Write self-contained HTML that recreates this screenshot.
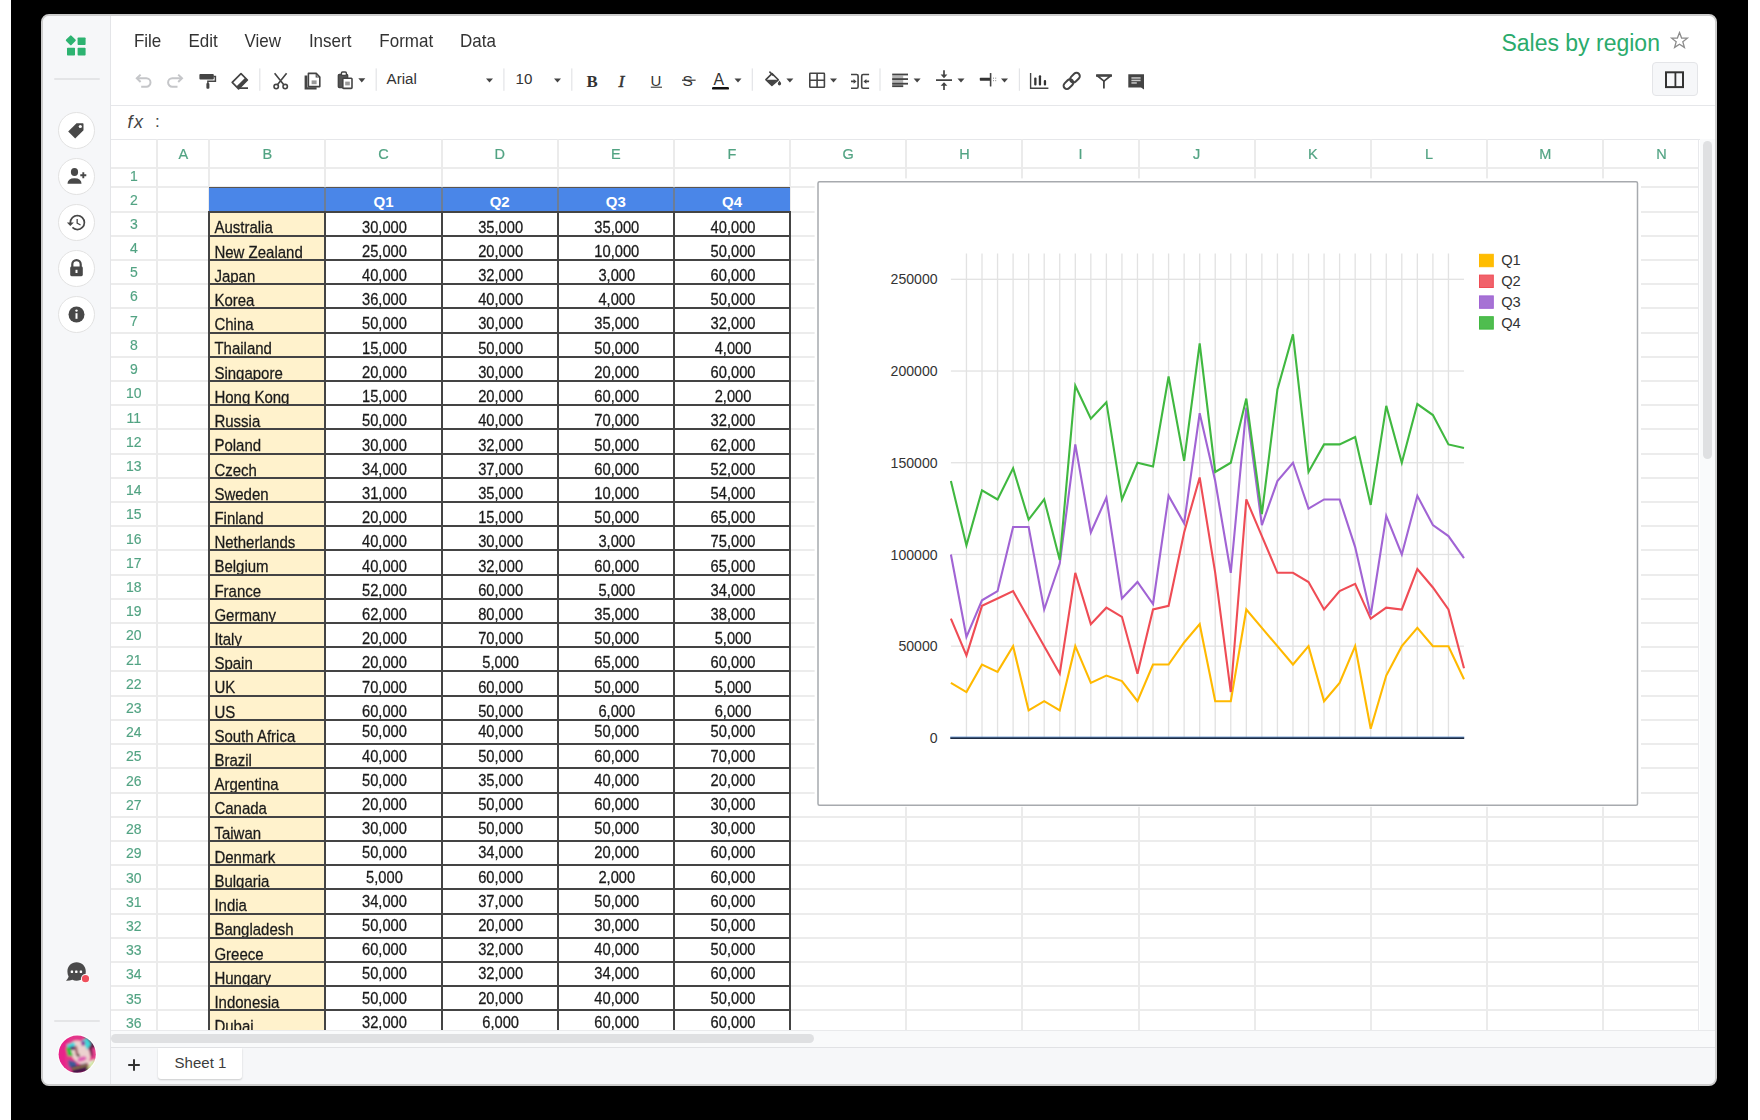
<!DOCTYPE html>
<html><head><meta charset="utf-8">
<style>
*{margin:0;padding:0;box-sizing:border-box}
html,body{width:1760px;height:1120px;overflow:hidden;background:#fff}
body{position:relative;font-family:"Liberation Sans",sans-serif;color:#333}
.abs{position:absolute}
#bg{position:absolute;left:11px;top:0;width:1737px;height:1120px;background:#000}
#win{position:absolute;left:41px;top:14px;width:1676px;height:1072px;background:#f6f7f9;border:2px solid #cdcdcd;border-radius:8px;overflow:hidden}
.menu{position:absolute;top:32.1px;font-size:17px;color:#333;white-space:nowrap;transform:scaleY(1.07);transform-origin:0 80%}
.tb{position:absolute}
.sep{position:absolute;top:68px;width:1px;height:23px;background:#e3e4e7}
.gl{position:absolute;background:#e6e6e6}
.ch{position:absolute;font-size:14.5px;color:#52a383;text-align:center;white-space:nowrap;transform:scaleY(1.05);transform-origin:50% 84.6%;-webkit-text-stroke:0.2px #52a383}
.rn{position:absolute;font-size:14px;color:#52a383;text-align:center;white-space:nowrap;-webkit-text-stroke:0.15px #52a383;transform:scaleY(1.06);transform-origin:50% 84.6%}
.cell{position:absolute;overflow:hidden;white-space:nowrap}
.txt{position:absolute;left:5px;font-size:15px;color:#1a1a1a;line-height:1;-webkit-text-stroke:0.25px #1a1a1a;transform:scaleY(1.07);transform-origin:0 84.6%}
.num{position:absolute;left:1px;right:-1px;text-align:center;font-size:14.7px;color:#1a1a1a;line-height:1;-webkit-text-stroke:0.25px #1a1a1a;transform:scaleY(1.1);transform-origin:50% 84.6%}
.circ{position:absolute;left:58px;width:37px;height:37px;border-radius:50%;background:#fff;border:1px solid #e2e2e2}
</style></head><body>
<div id="bg"></div>

<div id="win"></div>
<div class="abs" style="left:0;top:0;width:1760px;height:1120px;overflow:hidden;clip-path:inset(16px 45px 36px 43px round 6px)">
<div class="abs" style="left:43px;top:16px;width:67px;height:1068px;background:#f6f7f9"></div>
<div class="abs" style="left:110px;top:16px;width:1px;height:1068px;background:#e4e5e8"></div>
<div class="abs" style="left:111px;top:16px;width:1604px;height:1014px;background:#fff"></div>
<div class="abs" style="left:111px;top:105px;width:1604px;height:1px;background:#e6e7ea"></div>
<div class="abs" style="left:111px;top:138.5px;width:1604px;height:1px;background:#e6e7ea"></div>
<svg class="abs" style="left:60px;top:34px" width="30" height="26" viewBox="0 0 30 26">
<rect x="7" y="2.5" width="7.6" height="7.6" rx="1" transform="rotate(45 10.8 6.3)" fill="#2db371"/>
<rect x="17.6" y="3.4" width="8" height="7.6" rx="0.8" fill="#2db371"/>
<rect x="7" y="13.8" width="8" height="7.8" rx="0.8" fill="#2db371"/>
<rect x="17.6" y="13.8" width="8" height="7.8" rx="0.8" fill="#2db371"/>
</svg>
<div class="abs" style="left:53.5px;top:78px;width:46px;height:2px;background:#e4e5e7;border-radius:1px"></div>
<div class="abs" style="left:53.5px;top:1019.5px;width:46px;height:2px;background:#e4e5e7;border-radius:1px"></div>
<div class="circ" style="top:111.7px"></div>
<div class="circ" style="top:157.8px"></div>
<div class="circ" style="top:203.8px"></div>
<div class="circ" style="top:249.8px"></div>
<div class="circ" style="top:295.8px"></div>
<svg class="abs" style="left:66px;top:120px" width="21" height="21" viewBox="0 0 21 21">
<path d="M10.5 3.2 L16.8 3.2 Q17.5 3.2 17.5 3.9 L17.5 10.2 L9.2 18.5 L2.2 11.5 Z" fill="#484848"/>
<circle cx="14.3" cy="6.5" r="1.6" fill="#fff"/></svg>
<svg class="abs" style="left:66px;top:166px" width="22" height="20" viewBox="0 0 22 20">
<ellipse cx="8.5" cy="6" rx="3.6" ry="4" fill="#484848"/>
<path d="M1.5 17.8 Q1.5 12.2 8.5 12.2 Q15.5 12.2 15.5 17.8 Z" fill="#484848"/>
<path d="M17.3 6.2 V12.2 M14.3 9.2 H20.3" stroke="#484848" stroke-width="1.9"/></svg>
<svg class="abs" style="left:66px;top:212px" width="21" height="21" viewBox="0 0 24 24">
<path d="M13 3a9 9 0 0 0-9 9H1l3.89 3.89.07.14L9 12H6c0-3.87 3.13-7 7-7s7 3.13 7 7-3.13 7-7 7c-1.93 0-3.68-.79-4.94-2.06l-1.42 1.42A8.954 8.954 0 0 0 13 21a9 9 0 0 0 0-18zm-1 5v5l4.28 2.54.72-1.21-3.5-2.08V8H12z" fill="#484848"/></svg>
<svg class="abs" style="left:67px;top:258px" width="19" height="20" viewBox="0 0 19 20">
<path d="M5.3 9 V6.3 A4.2 4.2 0 0 1 13.7 6.3 V9" stroke="#484848" stroke-width="2.2" fill="none"/>
<rect x="3.2" y="8.6" width="12.6" height="9.6" rx="1.4" fill="#484848"/>
<rect x="8.5" y="11.8" width="2" height="3.2" fill="#fff"/></svg>
<svg class="abs" style="left:67px;top:305px" width="19" height="19" viewBox="0 0 19 19">
<circle cx="9.5" cy="9.5" r="8" fill="#484848"/>
<rect x="8.5" y="8.2" width="2" height="5.6" fill="#fff"/><circle cx="9.5" cy="5.6" r="1.2" fill="#fff"/></svg>
<svg class="abs" style="left:64px;top:960px" width="28" height="26" viewBox="0 0 28 26">
<path d="M12.6 2.3 C17.8 2.3 21.8 6.2 21.8 11.5 C21.8 16.8 17.8 20.7 12.6 20.7 C11 20.7 9.6 20.4 8.4 19.8 C6.6 20.5 4.4 20.9 2 20.8 C3.2 19.6 4.1 18.4 4.6 16.6 C3.8 15.1 3.4 13.4 3.4 11.5 C3.4 6.2 7.4 2.3 12.6 2.3Z" fill="#4a4a4b"/>
<rect x="6.7" y="10.5" width="2.4" height="2.4" rx="0.4" fill="#fff"/><rect x="11.1" y="10.5" width="2.4" height="2.4" rx="0.4" fill="#fff"/><rect x="15.7" y="10.5" width="2.4" height="2.4" rx="0.4" fill="#fff"/>
<circle cx="21.5" cy="18.7" r="4.6" fill="#fff"/><circle cx="21.5" cy="18.7" r="3.6" fill="#ef4f5c"/></svg>
<svg class="abs" style="left:56px;top:1033px" width="41" height="41" viewBox="-1 -1 41 41">
<defs><clipPath id="av"><circle cx="20.2" cy="20.2" r="18.6"/></clipPath>
<filter id="bl" x="-20%" y="-20%" width="140%" height="140%"><feGaussianBlur stdDeviation="0.9"/></filter></defs>
<circle cx="20.2" cy="20.2" r="19.6" fill="#fff"/>
<g clip-path="url(#av)"><g filter="url(#bl)">
<rect x="-2" y="-2" width="44" height="44" fill="#e3358a"/>
<path d="M26 0 L42 0 L42 26 L34 22 L30 8Z" fill="#5d1a4a"/>
<path d="M35 14 L42 14 L42 30 L36 28Z" fill="#e8408e"/>
<ellipse cx="23" cy="18.5" rx="9" ry="13" transform="rotate(-32 23 18.5)" fill="#ecd2cf"/>
<path d="M9 11 L17 8 L19 13 L12 15Z" fill="#40d8dc"/>
<path d="M9 14 L13 13 L16 22 L11 22Z" fill="#26c23a"/>
<path d="M13 13 L19 12 L19 16 L14 16Z" fill="#4a1a6a"/>
<path d="M24 7 L30 4 L34 10 L30 16 L27 10Z" fill="#40d8d8"/>
<path d="M24 8 L28 7 L28 11 L25 12Z" fill="#8a2a9a"/>
<path d="M17 12 L20 12 L22 22 L19 22Z" fill="#a06a70"/>
<circle cx="21.5" cy="21.5" r="1.3" fill="#3a1a20"/>
<ellipse cx="25" cy="25" rx="4.6" ry="2.4" transform="rotate(-15 25 25)" fill="#e060b4"/>
<path d="M11 26 L19 28 L20 35 L12 33Z" fill="#3f5a98"/>
<path d="M14 33 L30 29 L33 37 L16 41Z" fill="#4a1848"/><path d="M15 35 L31 31" stroke="#c0b050" stroke-width="1.2"/>
<path d="M31 28 L38 25 L37 33 L32 35Z" fill="#e8f0d8"/><path d="M30 35 L38 27" stroke="#b8e060" stroke-width="1.4"/>
<path d="M0 0 L14 0 Q5 16 10 40 L0 40Z" fill="#e8208a"/>
</g></g></svg>
<div class="menu" style="left:133.9px">File</div>
<div class="menu" style="left:188.4px">Edit</div>
<div class="menu" style="left:244.5px">View</div>
<div class="menu" style="left:308.9px">Insert</div>
<div class="menu" style="left:379.3px">Format</div>
<div class="menu" style="left:460px">Data</div>
<div class="abs" style="left:1501.4px;top:29.6px;font-size:23px;color:#2bab6c;white-space:nowrap">Sales by region</div>
<svg class="abs" style="left:1669.3px;top:30.4px" width="21" height="21" viewBox="0 0 21 21">
<path d="M10.5 2.5 L12.6 8 L18.4 8.2 L13.8 11.8 L15.4 17.4 L10.5 14.2 L5.6 17.4 L7.2 11.8 L2.6 8.2 L8.4 8 Z" fill="none" stroke="#8c8c8c" stroke-width="1.3" stroke-linejoin="miter"/></svg>
<div class="abs" style="left:1651.5px;top:62.4px;width:46px;height:34px;background:#f6f7f9;border:1px solid #e4e5e8;border-radius:4px"></div>
<svg class="abs" style="left:1664px;top:70px" width="22" height="19" viewBox="0 0 22 19">
<rect x="2" y="2.3" width="17" height="14.8" fill="none" stroke="#333" stroke-width="2"/><rect x="10.5" y="2.3" width="1.8" height="14.8" fill="#333"/></svg>
<!--toolbar-->
<svg class="abs" style="left:0;top:0" width="1760" height="120" viewBox="0 0 1760 120">
<g fill="none" stroke="#c5c6c9" stroke-width="2"><path d="M137.2 78.3 H146.3 A4.2 4.2 0 0 1 146.3 86.7 H141.2"/><path d="M140.6 74.6 L136.8 78.3 L140.6 82"/>
<path d="M181.6 78.3 H172.3 A4.2 4.2 0 0 0 172.3 86.7 H177.5"/><path d="M178.2 74.6 L182 78.3 L178.2 82"/></g>
<rect x="199.4" y="74" width="14.4" height="5.6" rx="1" fill="#444"/>
<path d="M213.5 76.6 H215.4 V81.2 H207.9 V83.6" fill="none" stroke="#444" stroke-width="1.5"/>
<rect x="206.4" y="83" width="3" height="5.8" rx="1" fill="#444"/>
<path d="M241 73.6 L247.4 80 L238.6 88.8 L232.2 82.4 Z" fill="none" stroke="#444" stroke-width="1.7" stroke-linejoin="round"/>
<path d="M247.4 80 L238.6 88.8 L236.4 86.6 L245.2 77.8 Z" fill="#444"/>
<path d="M238.6 88.2 H248" stroke="#444" stroke-width="1.7"/>
<g fill="none" stroke="#444" stroke-width="1.6"><path d="M274.6 73.2 L283.6 84.6 M286.6 73.2 L277.6 84.6"/><circle cx="276.2" cy="86.6" r="2.2"/><circle cx="285.2" cy="86.6" r="2.2"/></g>
<path d="M304.6 75.6 V89.4 H316.6 V87.2 H307.4 V75.6 Z" fill="#444"/>
<path d="M308.4 73.4 H316.2 L319.8 77 V86.6 H308.4 Z" fill="#fff" stroke="#444" stroke-width="1.6" stroke-linejoin="round"/>
<path d="M316.2 73.6 V77 H319.6" fill="none" stroke="#444" stroke-width="1.1"/>
<rect x="311.6" y="80.4" width="5" height="3.8" fill="#9a9a9a"/>
<rect x="338.4" y="74.6" width="9.2" height="12.8" rx="0.8" fill="#555" stroke="#444" stroke-width="1.5"/>
<rect x="341.4" y="72" width="5" height="3.4" rx="1.2" fill="#fff" stroke="#444" stroke-width="1.4"/>
<rect x="342.8" y="78.2" width="9.2" height="10.2" rx="0.8" fill="#fff" stroke="#444" stroke-width="1.6"/>
<rect x="345.2" y="81.6" width="4.6" height="3.8" fill="#9a9a9a"/>
<path d="M358.3 78.3 h7 l-3.5 4.2z" fill="#444"/>
<rect x="259.2" y="68.4" width="1.2" height="22.4" fill="#e3e4e7"/>
<rect x="375.6" y="68.4" width="1.2" height="22.4" fill="#e3e4e7"/>
<rect x="503.3" y="68.4" width="1.2" height="22.4" fill="#e3e4e7"/>
<rect x="571.2" y="68.4" width="1.2" height="22.4" fill="#e3e4e7"/>
<rect x="751.7" y="68.4" width="1.2" height="22.4" fill="#e3e4e7"/>
<rect x="879.4" y="68.4" width="1.2" height="22.4" fill="#e3e4e7"/>
<rect x="1018.8" y="68.4" width="1.2" height="22.4" fill="#e3e4e7"/>
<text x="386.6" y="84.3" font-family="Liberation Sans" font-size="15.1" fill="#333">Arial</text>
<path d="M486 78.4 h7 l-3.5 4.2z" fill="#444"/>
<text x="515.6" y="84.3" font-family="Liberation Sans" font-size="15.1" fill="#333">10</text>
<path d="M554 78.4 h7 l-3.5 4.2z" fill="#444"/>
<text x="586.4" y="86.7" font-family="Liberation Serif" font-weight="bold" font-size="16.8" fill="#333">B</text>
<text x="618.4" y="86.7" font-family="Liberation Serif" font-style="italic" font-size="17.6" fill="#333" stroke="#333" stroke-width="0.45">I</text>
<text x="650.6" y="85.6" font-family="Liberation Sans" font-size="15" fill="#333">U</text><rect x="650.8" y="86.6" width="11.2" height="1.3" fill="#555"/>
<text x="682.6" y="86.2" font-family="Liberation Sans" font-size="15.5" fill="#333">S</text><rect x="682" y="79.6" width="13.6" height="1.2" fill="#333"/>
<text x="713.6" y="85.2" font-family="Liberation Sans" font-size="15.8" fill="#333">A</text><rect x="712" y="87" width="17" height="2.6" rx="1.2" fill="#111"/>
<path d="M734.5 78.4 h7 l-3.5 4.2z" fill="#444"/>
<path d="M765.9 79.6 L772 73.6 L778.3 79.8 L771.9 85.4 Z" fill="none" stroke="#444" stroke-width="1.6" stroke-linejoin="round"/>
<path d="M766.4 79.8 H777.8 L771.9 85 Z" fill="#444"/>
<path d="M769.4 71.6 L773.2 75.4" stroke="#444" stroke-width="1.5"/>
<path d="M779.4 80.6 Q781.4 83.2 781.1 84.1 A1.7 1.7 0 0 1 777.8 84.1 Q777.6 83.2 779.4 80.6Z" fill="#444"/>
<path d="M786.4 78.4 h7 l-3.5 4.2z" fill="#444"/>
<g fill="none" stroke="#444" stroke-width="1.6"><rect x="809.8" y="73.3" width="14.6" height="14" rx="0.6"/><path d="M817.1 73.3 V87.3 M809.8 80.3 H824.4"/></g>
<path d="M830 78.4 h7 l-3.5 4.2z" fill="#444"/>
<g fill="none" stroke="#444" stroke-width="1.6" stroke-linejoin="round"><path d="M851 74.5 H856.6 Q858.1 74.5 858.1 76 V86.8 Q858.1 88.3 856.6 88.3 H851"/><path d="M869.1 74.5 H863.2 Q861.7 74.5 861.7 76 V86.8 Q861.7 88.3 863.2 88.3 H869.1"/><path d="M851 81.4 H854.6 M869.1 81.4 H865.4"/></g>
<path d="M853.6 79 L856.6 81.4 L853.6 83.8Z M866.4 79 L863.4 81.4 L866.4 83.8Z" fill="#444"/>
<rect x="892.2" y="75.6" width="11" height="11.2" fill="#b4b4b4"/>
<g fill="#444"><rect x="892.2" y="73.6" width="15.8" height="1.8"/><rect x="892.2" y="78.2" width="15.8" height="1.8"/><rect x="892.2" y="82.8" width="15.8" height="1.8"/><rect x="892.2" y="85.4" width="11" height="1.7"/></g>
<path d="M913.6 78.4 h7 l-3.5 4.2z" fill="#444"/>
<g fill="none" stroke="#444" stroke-width="1.7"><path d="M936 80.2 H952 M944 70.2 V77 M944 90 V83.4"/></g>
<path d="M940.6 74.6 L944 78.2 L947.4 74.6Z M940.6 85.8 L944 82.2 L947.4 85.8Z" fill="#444"/>
<path d="M957.5 78.4 h7 l-3.5 4.2z" fill="#444"/>
<rect x="979.8" y="77.8" width="10.6" height="2.9" rx="0.6" fill="#333"/><rect x="989.8" y="73" width="1.6" height="13.6" rx="0.6" fill="#444"/>
<g fill="#9a9a9a"><rect x="993" y="77.6" width="1" height="1.2"/><rect x="993" y="80" width="1" height="1.2"/><rect x="995.2" y="77.6" width="1" height="1.2"/><rect x="995.2" y="80" width="1" height="1.2"/></g>
<path d="M1001 78.4 h7 l-3.5 4.2z" fill="#444"/>
<path d="M1030.6 72.9 V88.2 H1048.4" fill="none" stroke="#444" stroke-width="1.4"/>
<g fill="#333"><rect x="1034.2" y="77.6" width="2.3" height="7.8" rx="1"/><rect x="1038.8" y="75.3" width="2.3" height="10.1" rx="1"/><rect x="1043.8" y="80.1" width="2.3" height="5.3" rx="1"/></g>
<g fill="none" stroke="#444" stroke-width="2" transform="rotate(-45 1071.7 80.9)"><rect x="1061.6" y="77.6" width="11" height="6.6" rx="3.3"/><rect x="1070.8" y="77.6" width="11" height="6.6" rx="3.3"/></g>
<path d="M1097 75.5 H1111 L1104 81.2 Z" fill="none" stroke="#444" stroke-width="1.7" stroke-linejoin="round"/>
<rect x="1096" y="74.2" width="16" height="2.6" rx="0.6" fill="#444"/><path d="M1103.9 80.6 V88.5" stroke="#444" stroke-width="1.8"/>
<path d="M1128.3 74.3 H1144 V89.6 L1141 87.4 H1128.3 Z" fill="#444"/>
<g fill="#c8c8c8"><rect x="1131.4" y="77.2" width="9.2" height="1.5"/><rect x="1131.4" y="79.7" width="9.2" height="1.5"/><rect x="1131.4" y="82.2" width="5.4" height="1.5"/></g>
</svg>
<div class="abs" style="left:127.4px;top:111.6px;font-size:18px;font-style:italic;color:#444;letter-spacing:1.6px">fx</div>
<div class="abs" style="left:155px;top:112px;font-size:17px;color:#444">:</div>
<div class="abs" style="left:111px;top:139px;width:1588px;height:891px;overflow:hidden">
<div class="abs" style="left:-1px;top:28px;width:1589px;height:2px;background:#ececec"></div>
<div class="abs" style="left:-1px;top:47px;width:1589px;height:2px;background:#ececec"></div>
<div class="abs" style="left:-1px;top:72px;width:1589px;height:2px;background:#ececec"></div>
<div class="abs" style="left:-1px;top:96px;width:1589px;height:2px;background:#ececec"></div>
<div class="abs" style="left:-1px;top:120px;width:1589px;height:2px;background:#ececec"></div>
<div class="abs" style="left:-1px;top:144px;width:1589px;height:2px;background:#ececec"></div>
<div class="abs" style="left:-1px;top:168px;width:1589px;height:2px;background:#ececec"></div>
<div class="abs" style="left:-1px;top:193px;width:1589px;height:2px;background:#ececec"></div>
<div class="abs" style="left:-1px;top:217px;width:1589px;height:2px;background:#ececec"></div>
<div class="abs" style="left:-1px;top:241px;width:1589px;height:2px;background:#ececec"></div>
<div class="abs" style="left:-1px;top:265px;width:1589px;height:2px;background:#ececec"></div>
<div class="abs" style="left:-1px;top:289px;width:1589px;height:2px;background:#ececec"></div>
<div class="abs" style="left:-1px;top:314px;width:1589px;height:2px;background:#ececec"></div>
<div class="abs" style="left:-1px;top:338px;width:1589px;height:2px;background:#ececec"></div>
<div class="abs" style="left:-1px;top:362px;width:1589px;height:2px;background:#ececec"></div>
<div class="abs" style="left:-1px;top:386px;width:1589px;height:2px;background:#ececec"></div>
<div class="abs" style="left:-1px;top:410px;width:1589px;height:2px;background:#ececec"></div>
<div class="abs" style="left:-1px;top:435px;width:1589px;height:2px;background:#ececec"></div>
<div class="abs" style="left:-1px;top:459px;width:1589px;height:2px;background:#ececec"></div>
<div class="abs" style="left:-1px;top:483px;width:1589px;height:2px;background:#ececec"></div>
<div class="abs" style="left:-1px;top:507px;width:1589px;height:2px;background:#ececec"></div>
<div class="abs" style="left:-1px;top:531px;width:1589px;height:2px;background:#ececec"></div>
<div class="abs" style="left:-1px;top:556px;width:1589px;height:2px;background:#ececec"></div>
<div class="abs" style="left:-1px;top:580px;width:1589px;height:2px;background:#ececec"></div>
<div class="abs" style="left:-1px;top:604px;width:1589px;height:2px;background:#ececec"></div>
<div class="abs" style="left:-1px;top:628px;width:1589px;height:2px;background:#ececec"></div>
<div class="abs" style="left:-1px;top:653px;width:1589px;height:2px;background:#ececec"></div>
<div class="abs" style="left:-1px;top:677px;width:1589px;height:2px;background:#ececec"></div>
<div class="abs" style="left:-1px;top:701px;width:1589px;height:2px;background:#ececec"></div>
<div class="abs" style="left:-1px;top:725px;width:1589px;height:2px;background:#ececec"></div>
<div class="abs" style="left:-1px;top:749px;width:1589px;height:2px;background:#ececec"></div>
<div class="abs" style="left:-1px;top:774px;width:1589px;height:2px;background:#ececec"></div>
<div class="abs" style="left:-1px;top:798px;width:1589px;height:2px;background:#ececec"></div>
<div class="abs" style="left:-1px;top:822px;width:1589px;height:2px;background:#ececec"></div>
<div class="abs" style="left:-1px;top:846px;width:1589px;height:2px;background:#ececec"></div>
<div class="abs" style="left:-1px;top:870px;width:1589px;height:2px;background:#ececec"></div>
<div class="abs" style="left:45px;top:-0.3px;width:2px;height:891.3px;background:#ebebeb"></div>
<div class="abs" style="left:97px;top:-0.3px;width:2px;height:891.3px;background:#ebebeb"></div>
<div class="abs" style="left:213px;top:-0.3px;width:2px;height:891.3px;background:#ebebeb"></div>
<div class="abs" style="left:330px;top:-0.3px;width:2px;height:891.3px;background:#ebebeb"></div>
<div class="abs" style="left:446px;top:-0.3px;width:2px;height:891.3px;background:#ebebeb"></div>
<div class="abs" style="left:562px;top:-0.3px;width:2px;height:891.3px;background:#ebebeb"></div>
<div class="abs" style="left:678px;top:-0.3px;width:2px;height:891.3px;background:#ebebeb"></div>
<div class="abs" style="left:794px;top:-0.3px;width:2px;height:891.3px;background:#ebebeb"></div>
<div class="abs" style="left:910px;top:-0.3px;width:2px;height:891.3px;background:#ebebeb"></div>
<div class="abs" style="left:1027px;top:-0.3px;width:2px;height:891.3px;background:#ebebeb"></div>
<div class="abs" style="left:1143px;top:-0.3px;width:2px;height:891.3px;background:#ebebeb"></div>
<div class="abs" style="left:1259px;top:-0.3px;width:2px;height:891.3px;background:#ebebeb"></div>
<div class="abs" style="left:1375px;top:-0.3px;width:2px;height:891.3px;background:#ebebeb"></div>
<div class="abs" style="left:1491px;top:-0.3px;width:2px;height:891.3px;background:#ebebeb"></div>
<div class="abs" style="left:1587.25px;top:-0.3px;width:1.5px;height:891.3px;background:#e8e9ec"></div>
<div class="ch" style="left:46.4px;top:7.73px;width:52px;line-height:1">A</div>
<div class="ch" style="left:98.4px;top:7.73px;width:116px;line-height:1">B</div>
<div class="ch" style="left:214.4px;top:7.73px;width:116.18px;line-height:1">C</div>
<div class="ch" style="left:330.58px;top:7.73px;width:116.18px;line-height:1">D</div>
<div class="ch" style="left:446.76px;top:7.73px;width:116.18px;line-height:1">E</div>
<div class="ch" style="left:562.94px;top:7.73px;width:116.18px;line-height:1">F</div>
<div class="ch" style="left:679.12px;top:7.73px;width:116.18px;line-height:1">G</div>
<div class="ch" style="left:795.3px;top:7.73px;width:116.18px;line-height:1">H</div>
<div class="ch" style="left:911.48px;top:7.73px;width:116.18px;line-height:1">I</div>
<div class="ch" style="left:1027.66px;top:7.73px;width:116.18px;line-height:1">J</div>
<div class="ch" style="left:1143.84px;top:7.73px;width:116.18px;line-height:1">K</div>
<div class="ch" style="left:1260.02px;top:7.73px;width:116.18px;line-height:1">L</div>
<div class="ch" style="left:1376.2px;top:7.73px;width:116.18px;line-height:1">M</div>
<div class="ch" style="left:1492.38px;top:7.73px;width:116.18px;line-height:1">N</div>
<div class="rn" style="left:-0.8px;top:30.15px;width:47.2px;line-height:1">1</div>
<div class="rn" style="left:-0.8px;top:53.7px;width:47.2px;line-height:1">2</div>
<div class="rn" style="left:-0.8px;top:77.86px;width:47.2px;line-height:1">3</div>
<div class="rn" style="left:-0.8px;top:102.06px;width:47.2px;line-height:1">4</div>
<div class="rn" style="left:-0.8px;top:126.27px;width:47.2px;line-height:1">5</div>
<div class="rn" style="left:-0.8px;top:150.49px;width:47.2px;line-height:1">6</div>
<div class="rn" style="left:-0.8px;top:174.7px;width:47.2px;line-height:1">7</div>
<div class="rn" style="left:-0.8px;top:198.9px;width:47.2px;line-height:1">8</div>
<div class="rn" style="left:-0.8px;top:223.12px;width:47.2px;line-height:1">9</div>
<div class="rn" style="left:-0.8px;top:247.33px;width:47.2px;line-height:1">10</div>
<div class="rn" style="left:-0.8px;top:271.53px;width:47.2px;line-height:1">11</div>
<div class="rn" style="left:-0.8px;top:295.75px;width:47.2px;line-height:1">12</div>
<div class="rn" style="left:-0.8px;top:319.96px;width:47.2px;line-height:1">13</div>
<div class="rn" style="left:-0.8px;top:344.16px;width:47.2px;line-height:1">14</div>
<div class="rn" style="left:-0.8px;top:368.38px;width:47.2px;line-height:1">15</div>
<div class="rn" style="left:-0.8px;top:392.59px;width:47.2px;line-height:1">16</div>
<div class="rn" style="left:-0.8px;top:416.8px;width:47.2px;line-height:1">17</div>
<div class="rn" style="left:-0.8px;top:441.01px;width:47.2px;line-height:1">18</div>
<div class="rn" style="left:-0.8px;top:465.21px;width:47.2px;line-height:1">19</div>
<div class="rn" style="left:-0.8px;top:489.42px;width:47.2px;line-height:1">20</div>
<div class="rn" style="left:-0.8px;top:513.63px;width:47.2px;line-height:1">21</div>
<div class="rn" style="left:-0.8px;top:537.85px;width:47.2px;line-height:1">22</div>
<div class="rn" style="left:-0.8px;top:562.06px;width:47.2px;line-height:1">23</div>
<div class="rn" style="left:-0.8px;top:586.27px;width:47.2px;line-height:1">24</div>
<div class="rn" style="left:-0.8px;top:610.48px;width:47.2px;line-height:1">25</div>
<div class="rn" style="left:-0.8px;top:634.68px;width:47.2px;line-height:1">26</div>
<div class="rn" style="left:-0.8px;top:658.89px;width:47.2px;line-height:1">27</div>
<div class="rn" style="left:-0.8px;top:683.11px;width:47.2px;line-height:1">28</div>
<div class="rn" style="left:-0.8px;top:707.32px;width:47.2px;line-height:1">29</div>
<div class="rn" style="left:-0.8px;top:731.53px;width:47.2px;line-height:1">30</div>
<div class="rn" style="left:-0.8px;top:755.74px;width:47.2px;line-height:1">31</div>
<div class="rn" style="left:-0.8px;top:779.95px;width:47.2px;line-height:1">32</div>
<div class="rn" style="left:-0.8px;top:804.15px;width:47.2px;line-height:1">33</div>
<div class="rn" style="left:-0.8px;top:828.37px;width:47.2px;line-height:1">34</div>
<div class="rn" style="left:-0.8px;top:852.58px;width:47.2px;line-height:1">35</div>
<div class="rn" style="left:-0.8px;top:876.78px;width:47.2px;line-height:1">36</div>
<div class="abs" style="left:98.4px;top:48.4px;width:580.72px;height:24.1px;background:#4a86e8"></div>
<div class="abs" style="left:214.4px;top:55.3px;width:116.18px;text-align:center;font-size:15px;font-weight:bold;color:#fff;line-height:1">Q1</div>
<div class="abs" style="left:330.58px;top:55.3px;width:116.18px;text-align:center;font-size:15px;font-weight:bold;color:#fff;line-height:1">Q2</div>
<div class="abs" style="left:446.76px;top:55.3px;width:116.18px;text-align:center;font-size:15px;font-weight:bold;color:#fff;line-height:1">Q3</div>
<div class="abs" style="left:562.94px;top:55.3px;width:116.18px;text-align:center;font-size:15px;font-weight:bold;color:#fff;line-height:1">Q4</div>
<div class="cell" style="left:98.4px;top:72.5px;width:116px;height:24.21px;background:#fff2cc"><div class="txt" style="top:8.91px">Australia</div></div>
<div class="cell" style="left:214.4px;top:72.5px;width:116.18px;height:24.21px"><div class="num" style="top:9.17px">30,000</div></div>
<div class="cell" style="left:330.58px;top:72.5px;width:116.18px;height:24.21px"><div class="num" style="top:9.17px">35,000</div></div>
<div class="cell" style="left:446.76px;top:72.5px;width:116.18px;height:24.21px"><div class="num" style="top:9.17px">35,000</div></div>
<div class="cell" style="left:562.94px;top:72.5px;width:116.18px;height:24.21px"><div class="num" style="top:9.17px">40,000</div></div>
<div class="cell" style="left:98.4px;top:96.71px;width:116px;height:24.21px;background:#fff2cc"><div class="txt" style="top:8.91px">New Zealand</div></div>
<div class="cell" style="left:214.4px;top:96.71px;width:116.18px;height:24.21px"><div class="num" style="top:9.17px">25,000</div></div>
<div class="cell" style="left:330.58px;top:96.71px;width:116.18px;height:24.21px"><div class="num" style="top:9.17px">20,000</div></div>
<div class="cell" style="left:446.76px;top:96.71px;width:116.18px;height:24.21px"><div class="num" style="top:9.17px">10,000</div></div>
<div class="cell" style="left:562.94px;top:96.71px;width:116.18px;height:24.21px"><div class="num" style="top:9.17px">50,000</div></div>
<div class="cell" style="left:98.4px;top:120.92px;width:116px;height:24.21px;background:#fff2cc"><div class="txt" style="top:8.91px">Japan</div></div>
<div class="cell" style="left:214.4px;top:120.92px;width:116.18px;height:24.21px"><div class="num" style="top:9.17px">40,000</div></div>
<div class="cell" style="left:330.58px;top:120.92px;width:116.18px;height:24.21px"><div class="num" style="top:9.17px">32,000</div></div>
<div class="cell" style="left:446.76px;top:120.92px;width:116.18px;height:24.21px"><div class="num" style="top:9.17px">3,000</div></div>
<div class="cell" style="left:562.94px;top:120.92px;width:116.18px;height:24.21px"><div class="num" style="top:9.17px">60,000</div></div>
<div class="cell" style="left:98.4px;top:145.13px;width:116px;height:24.21px;background:#fff2cc"><div class="txt" style="top:8.91px">Korea</div></div>
<div class="cell" style="left:214.4px;top:145.13px;width:116.18px;height:24.21px"><div class="num" style="top:9.17px">36,000</div></div>
<div class="cell" style="left:330.58px;top:145.13px;width:116.18px;height:24.21px"><div class="num" style="top:9.17px">40,000</div></div>
<div class="cell" style="left:446.76px;top:145.13px;width:116.18px;height:24.21px"><div class="num" style="top:9.17px">4,000</div></div>
<div class="cell" style="left:562.94px;top:145.13px;width:116.18px;height:24.21px"><div class="num" style="top:9.17px">50,000</div></div>
<div class="cell" style="left:98.4px;top:169.34px;width:116px;height:24.21px;background:#fff2cc"><div class="txt" style="top:8.91px">China</div></div>
<div class="cell" style="left:214.4px;top:169.34px;width:116.18px;height:24.21px"><div class="num" style="top:9.17px">50,000</div></div>
<div class="cell" style="left:330.58px;top:169.34px;width:116.18px;height:24.21px"><div class="num" style="top:9.17px">30,000</div></div>
<div class="cell" style="left:446.76px;top:169.34px;width:116.18px;height:24.21px"><div class="num" style="top:9.17px">35,000</div></div>
<div class="cell" style="left:562.94px;top:169.34px;width:116.18px;height:24.21px"><div class="num" style="top:9.17px">32,000</div></div>
<div class="cell" style="left:98.4px;top:193.55px;width:116px;height:24.21px;background:#fff2cc"><div class="txt" style="top:8.91px">Thailand</div></div>
<div class="cell" style="left:214.4px;top:193.55px;width:116.18px;height:24.21px"><div class="num" style="top:9.17px">15,000</div></div>
<div class="cell" style="left:330.58px;top:193.55px;width:116.18px;height:24.21px"><div class="num" style="top:9.17px">50,000</div></div>
<div class="cell" style="left:446.76px;top:193.55px;width:116.18px;height:24.21px"><div class="num" style="top:9.17px">50,000</div></div>
<div class="cell" style="left:562.94px;top:193.55px;width:116.18px;height:24.21px"><div class="num" style="top:9.17px">4,000</div></div>
<div class="cell" style="left:98.4px;top:217.76px;width:116px;height:24.21px;background:#fff2cc"><div class="txt" style="top:8.91px">Singapore</div></div>
<div class="cell" style="left:214.4px;top:217.76px;width:116.18px;height:24.21px"><div class="num" style="top:9.17px">20,000</div></div>
<div class="cell" style="left:330.58px;top:217.76px;width:116.18px;height:24.21px"><div class="num" style="top:9.17px">30,000</div></div>
<div class="cell" style="left:446.76px;top:217.76px;width:116.18px;height:24.21px"><div class="num" style="top:9.17px">20,000</div></div>
<div class="cell" style="left:562.94px;top:217.76px;width:116.18px;height:24.21px"><div class="num" style="top:9.17px">60,000</div></div>
<div class="cell" style="left:98.4px;top:241.97px;width:116px;height:24.21px;background:#fff2cc"><div class="txt" style="top:8.91px">Hong Kong</div></div>
<div class="cell" style="left:214.4px;top:241.97px;width:116.18px;height:24.21px"><div class="num" style="top:9.17px">15,000</div></div>
<div class="cell" style="left:330.58px;top:241.97px;width:116.18px;height:24.21px"><div class="num" style="top:9.17px">20,000</div></div>
<div class="cell" style="left:446.76px;top:241.97px;width:116.18px;height:24.21px"><div class="num" style="top:9.17px">60,000</div></div>
<div class="cell" style="left:562.94px;top:241.97px;width:116.18px;height:24.21px"><div class="num" style="top:9.17px">2,000</div></div>
<div class="cell" style="left:98.4px;top:266.18px;width:116px;height:24.21px;background:#fff2cc"><div class="txt" style="top:8.91px">Russia</div></div>
<div class="cell" style="left:214.4px;top:266.18px;width:116.18px;height:24.21px"><div class="num" style="top:9.17px">50,000</div></div>
<div class="cell" style="left:330.58px;top:266.18px;width:116.18px;height:24.21px"><div class="num" style="top:9.17px">40,000</div></div>
<div class="cell" style="left:446.76px;top:266.18px;width:116.18px;height:24.21px"><div class="num" style="top:9.17px">70,000</div></div>
<div class="cell" style="left:562.94px;top:266.18px;width:116.18px;height:24.21px"><div class="num" style="top:9.17px">32,000</div></div>
<div class="cell" style="left:98.4px;top:290.39px;width:116px;height:24.21px;background:#fff2cc"><div class="txt" style="top:8.91px">Poland</div></div>
<div class="cell" style="left:214.4px;top:290.39px;width:116.18px;height:24.21px"><div class="num" style="top:9.17px">30,000</div></div>
<div class="cell" style="left:330.58px;top:290.39px;width:116.18px;height:24.21px"><div class="num" style="top:9.17px">32,000</div></div>
<div class="cell" style="left:446.76px;top:290.39px;width:116.18px;height:24.21px"><div class="num" style="top:9.17px">50,000</div></div>
<div class="cell" style="left:562.94px;top:290.39px;width:116.18px;height:24.21px"><div class="num" style="top:9.17px">62,000</div></div>
<div class="cell" style="left:98.4px;top:314.6px;width:116px;height:24.21px;background:#fff2cc"><div class="txt" style="top:8.91px">Czech</div></div>
<div class="cell" style="left:214.4px;top:314.6px;width:116.18px;height:24.21px"><div class="num" style="top:9.17px">34,000</div></div>
<div class="cell" style="left:330.58px;top:314.6px;width:116.18px;height:24.21px"><div class="num" style="top:9.17px">37,000</div></div>
<div class="cell" style="left:446.76px;top:314.6px;width:116.18px;height:24.21px"><div class="num" style="top:9.17px">60,000</div></div>
<div class="cell" style="left:562.94px;top:314.6px;width:116.18px;height:24.21px"><div class="num" style="top:9.17px">52,000</div></div>
<div class="cell" style="left:98.4px;top:338.81px;width:116px;height:24.21px;background:#fff2cc"><div class="txt" style="top:8.91px">Sweden</div></div>
<div class="cell" style="left:214.4px;top:338.81px;width:116.18px;height:24.21px"><div class="num" style="top:9.17px">31,000</div></div>
<div class="cell" style="left:330.58px;top:338.81px;width:116.18px;height:24.21px"><div class="num" style="top:9.17px">35,000</div></div>
<div class="cell" style="left:446.76px;top:338.81px;width:116.18px;height:24.21px"><div class="num" style="top:9.17px">10,000</div></div>
<div class="cell" style="left:562.94px;top:338.81px;width:116.18px;height:24.21px"><div class="num" style="top:9.17px">54,000</div></div>
<div class="cell" style="left:98.4px;top:363.02px;width:116px;height:24.21px;background:#fff2cc"><div class="txt" style="top:8.91px">Finland</div></div>
<div class="cell" style="left:214.4px;top:363.02px;width:116.18px;height:24.21px"><div class="num" style="top:9.17px">20,000</div></div>
<div class="cell" style="left:330.58px;top:363.02px;width:116.18px;height:24.21px"><div class="num" style="top:9.17px">15,000</div></div>
<div class="cell" style="left:446.76px;top:363.02px;width:116.18px;height:24.21px"><div class="num" style="top:9.17px">50,000</div></div>
<div class="cell" style="left:562.94px;top:363.02px;width:116.18px;height:24.21px"><div class="num" style="top:9.17px">65,000</div></div>
<div class="cell" style="left:98.4px;top:387.23px;width:116px;height:24.21px;background:#fff2cc"><div class="txt" style="top:8.91px">Netherlands</div></div>
<div class="cell" style="left:214.4px;top:387.23px;width:116.18px;height:24.21px"><div class="num" style="top:9.17px">40,000</div></div>
<div class="cell" style="left:330.58px;top:387.23px;width:116.18px;height:24.21px"><div class="num" style="top:9.17px">30,000</div></div>
<div class="cell" style="left:446.76px;top:387.23px;width:116.18px;height:24.21px"><div class="num" style="top:9.17px">3,000</div></div>
<div class="cell" style="left:562.94px;top:387.23px;width:116.18px;height:24.21px"><div class="num" style="top:9.17px">75,000</div></div>
<div class="cell" style="left:98.4px;top:411.44px;width:116px;height:24.21px;background:#fff2cc"><div class="txt" style="top:8.91px">Belgium</div></div>
<div class="cell" style="left:214.4px;top:411.44px;width:116.18px;height:24.21px"><div class="num" style="top:9.17px">40,000</div></div>
<div class="cell" style="left:330.58px;top:411.44px;width:116.18px;height:24.21px"><div class="num" style="top:9.17px">32,000</div></div>
<div class="cell" style="left:446.76px;top:411.44px;width:116.18px;height:24.21px"><div class="num" style="top:9.17px">60,000</div></div>
<div class="cell" style="left:562.94px;top:411.44px;width:116.18px;height:24.21px"><div class="num" style="top:9.17px">65,000</div></div>
<div class="cell" style="left:98.4px;top:435.65px;width:116px;height:24.21px;background:#fff2cc"><div class="txt" style="top:8.91px">France</div></div>
<div class="cell" style="left:214.4px;top:435.65px;width:116.18px;height:24.21px"><div class="num" style="top:9.17px">52,000</div></div>
<div class="cell" style="left:330.58px;top:435.65px;width:116.18px;height:24.21px"><div class="num" style="top:9.17px">60,000</div></div>
<div class="cell" style="left:446.76px;top:435.65px;width:116.18px;height:24.21px"><div class="num" style="top:9.17px">5,000</div></div>
<div class="cell" style="left:562.94px;top:435.65px;width:116.18px;height:24.21px"><div class="num" style="top:9.17px">34,000</div></div>
<div class="cell" style="left:98.4px;top:459.86px;width:116px;height:24.21px;background:#fff2cc"><div class="txt" style="top:8.91px">Germany</div></div>
<div class="cell" style="left:214.4px;top:459.86px;width:116.18px;height:24.21px"><div class="num" style="top:9.17px">62,000</div></div>
<div class="cell" style="left:330.58px;top:459.86px;width:116.18px;height:24.21px"><div class="num" style="top:9.17px">80,000</div></div>
<div class="cell" style="left:446.76px;top:459.86px;width:116.18px;height:24.21px"><div class="num" style="top:9.17px">35,000</div></div>
<div class="cell" style="left:562.94px;top:459.86px;width:116.18px;height:24.21px"><div class="num" style="top:9.17px">38,000</div></div>
<div class="cell" style="left:98.4px;top:484.07px;width:116px;height:24.21px;background:#fff2cc"><div class="txt" style="top:8.91px">Italy</div></div>
<div class="cell" style="left:214.4px;top:484.07px;width:116.18px;height:24.21px"><div class="num" style="top:9.17px">20,000</div></div>
<div class="cell" style="left:330.58px;top:484.07px;width:116.18px;height:24.21px"><div class="num" style="top:9.17px">70,000</div></div>
<div class="cell" style="left:446.76px;top:484.07px;width:116.18px;height:24.21px"><div class="num" style="top:9.17px">50,000</div></div>
<div class="cell" style="left:562.94px;top:484.07px;width:116.18px;height:24.21px"><div class="num" style="top:9.17px">5,000</div></div>
<div class="cell" style="left:98.4px;top:508.28px;width:116px;height:24.21px;background:#fff2cc"><div class="txt" style="top:8.91px">Spain</div></div>
<div class="cell" style="left:214.4px;top:508.28px;width:116.18px;height:24.21px"><div class="num" style="top:9.17px">20,000</div></div>
<div class="cell" style="left:330.58px;top:508.28px;width:116.18px;height:24.21px"><div class="num" style="top:9.17px">5,000</div></div>
<div class="cell" style="left:446.76px;top:508.28px;width:116.18px;height:24.21px"><div class="num" style="top:9.17px">65,000</div></div>
<div class="cell" style="left:562.94px;top:508.28px;width:116.18px;height:24.21px"><div class="num" style="top:9.17px">60,000</div></div>
<div class="cell" style="left:98.4px;top:532.49px;width:116px;height:24.21px;background:#fff2cc"><div class="txt" style="top:8.91px">UK</div></div>
<div class="cell" style="left:214.4px;top:532.49px;width:116.18px;height:24.21px"><div class="num" style="top:9.17px">70,000</div></div>
<div class="cell" style="left:330.58px;top:532.49px;width:116.18px;height:24.21px"><div class="num" style="top:9.17px">60,000</div></div>
<div class="cell" style="left:446.76px;top:532.49px;width:116.18px;height:24.21px"><div class="num" style="top:9.17px">50,000</div></div>
<div class="cell" style="left:562.94px;top:532.49px;width:116.18px;height:24.21px"><div class="num" style="top:9.17px">5,000</div></div>
<div class="cell" style="left:98.4px;top:556.7px;width:116px;height:24.21px;background:#fff2cc"><div class="txt" style="top:8.91px">US</div></div>
<div class="cell" style="left:214.4px;top:556.7px;width:116.18px;height:24.21px"><div class="num" style="top:9.17px">60,000</div></div>
<div class="cell" style="left:330.58px;top:556.7px;width:116.18px;height:24.21px"><div class="num" style="top:9.17px">50,000</div></div>
<div class="cell" style="left:446.76px;top:556.7px;width:116.18px;height:24.21px"><div class="num" style="top:9.17px">6,000</div></div>
<div class="cell" style="left:562.94px;top:556.7px;width:116.18px;height:24.21px"><div class="num" style="top:9.17px">6,000</div></div>
<div class="cell" style="left:98.4px;top:580.91px;width:116px;height:24.21px;background:#fff2cc"><div class="txt" style="top:8.91px">South Africa</div></div>
<div class="cell" style="left:214.4px;top:580.91px;width:116.18px;height:24.21px"><div class="num" style="top:5.47px">50,000</div></div>
<div class="cell" style="left:330.58px;top:580.91px;width:116.18px;height:24.21px"><div class="num" style="top:5.47px">40,000</div></div>
<div class="cell" style="left:446.76px;top:580.91px;width:116.18px;height:24.21px"><div class="num" style="top:5.47px">50,000</div></div>
<div class="cell" style="left:562.94px;top:580.91px;width:116.18px;height:24.21px"><div class="num" style="top:5.47px">50,000</div></div>
<div class="cell" style="left:98.4px;top:605.12px;width:116px;height:24.21px;background:#fff2cc"><div class="txt" style="top:8.91px">Brazil</div></div>
<div class="cell" style="left:214.4px;top:605.12px;width:116.18px;height:24.21px"><div class="num" style="top:5.47px">40,000</div></div>
<div class="cell" style="left:330.58px;top:605.12px;width:116.18px;height:24.21px"><div class="num" style="top:5.47px">50,000</div></div>
<div class="cell" style="left:446.76px;top:605.12px;width:116.18px;height:24.21px"><div class="num" style="top:5.47px">60,000</div></div>
<div class="cell" style="left:562.94px;top:605.12px;width:116.18px;height:24.21px"><div class="num" style="top:5.47px">70,000</div></div>
<div class="cell" style="left:98.4px;top:629.33px;width:116px;height:24.21px;background:#fff2cc"><div class="txt" style="top:8.91px">Argentina</div></div>
<div class="cell" style="left:214.4px;top:629.33px;width:116.18px;height:24.21px"><div class="num" style="top:5.47px">50,000</div></div>
<div class="cell" style="left:330.58px;top:629.33px;width:116.18px;height:24.21px"><div class="num" style="top:5.47px">35,000</div></div>
<div class="cell" style="left:446.76px;top:629.33px;width:116.18px;height:24.21px"><div class="num" style="top:5.47px">40,000</div></div>
<div class="cell" style="left:562.94px;top:629.33px;width:116.18px;height:24.21px"><div class="num" style="top:5.47px">20,000</div></div>
<div class="cell" style="left:98.4px;top:653.54px;width:116px;height:24.21px;background:#fff2cc"><div class="txt" style="top:8.91px">Canada</div></div>
<div class="cell" style="left:214.4px;top:653.54px;width:116.18px;height:24.21px"><div class="num" style="top:5.47px">20,000</div></div>
<div class="cell" style="left:330.58px;top:653.54px;width:116.18px;height:24.21px"><div class="num" style="top:5.47px">50,000</div></div>
<div class="cell" style="left:446.76px;top:653.54px;width:116.18px;height:24.21px"><div class="num" style="top:5.47px">60,000</div></div>
<div class="cell" style="left:562.94px;top:653.54px;width:116.18px;height:24.21px"><div class="num" style="top:5.47px">30,000</div></div>
<div class="cell" style="left:98.4px;top:677.75px;width:116px;height:24.21px;background:#fff2cc"><div class="txt" style="top:8.91px">Taiwan</div></div>
<div class="cell" style="left:214.4px;top:677.75px;width:116.18px;height:24.21px"><div class="num" style="top:5.47px">30,000</div></div>
<div class="cell" style="left:330.58px;top:677.75px;width:116.18px;height:24.21px"><div class="num" style="top:5.47px">50,000</div></div>
<div class="cell" style="left:446.76px;top:677.75px;width:116.18px;height:24.21px"><div class="num" style="top:5.47px">50,000</div></div>
<div class="cell" style="left:562.94px;top:677.75px;width:116.18px;height:24.21px"><div class="num" style="top:5.47px">30,000</div></div>
<div class="cell" style="left:98.4px;top:701.96px;width:116px;height:24.21px;background:#fff2cc"><div class="txt" style="top:8.91px">Denmark</div></div>
<div class="cell" style="left:214.4px;top:701.96px;width:116.18px;height:24.21px"><div class="num" style="top:5.47px">50,000</div></div>
<div class="cell" style="left:330.58px;top:701.96px;width:116.18px;height:24.21px"><div class="num" style="top:5.47px">34,000</div></div>
<div class="cell" style="left:446.76px;top:701.96px;width:116.18px;height:24.21px"><div class="num" style="top:5.47px">20,000</div></div>
<div class="cell" style="left:562.94px;top:701.96px;width:116.18px;height:24.21px"><div class="num" style="top:5.47px">60,000</div></div>
<div class="cell" style="left:98.4px;top:726.17px;width:116px;height:24.21px;background:#fff2cc"><div class="txt" style="top:8.91px">Bulgaria</div></div>
<div class="cell" style="left:214.4px;top:726.17px;width:116.18px;height:24.21px"><div class="num" style="top:5.47px">5,000</div></div>
<div class="cell" style="left:330.58px;top:726.17px;width:116.18px;height:24.21px"><div class="num" style="top:5.47px">60,000</div></div>
<div class="cell" style="left:446.76px;top:726.17px;width:116.18px;height:24.21px"><div class="num" style="top:5.47px">2,000</div></div>
<div class="cell" style="left:562.94px;top:726.17px;width:116.18px;height:24.21px"><div class="num" style="top:5.47px">60,000</div></div>
<div class="cell" style="left:98.4px;top:750.38px;width:116px;height:24.21px;background:#fff2cc"><div class="txt" style="top:8.91px">India</div></div>
<div class="cell" style="left:214.4px;top:750.38px;width:116.18px;height:24.21px"><div class="num" style="top:5.47px">34,000</div></div>
<div class="cell" style="left:330.58px;top:750.38px;width:116.18px;height:24.21px"><div class="num" style="top:5.47px">37,000</div></div>
<div class="cell" style="left:446.76px;top:750.38px;width:116.18px;height:24.21px"><div class="num" style="top:5.47px">50,000</div></div>
<div class="cell" style="left:562.94px;top:750.38px;width:116.18px;height:24.21px"><div class="num" style="top:5.47px">60,000</div></div>
<div class="cell" style="left:98.4px;top:774.59px;width:116px;height:24.21px;background:#fff2cc"><div class="txt" style="top:8.91px">Bangladesh</div></div>
<div class="cell" style="left:214.4px;top:774.59px;width:116.18px;height:24.21px"><div class="num" style="top:5.47px">50,000</div></div>
<div class="cell" style="left:330.58px;top:774.59px;width:116.18px;height:24.21px"><div class="num" style="top:5.47px">20,000</div></div>
<div class="cell" style="left:446.76px;top:774.59px;width:116.18px;height:24.21px"><div class="num" style="top:5.47px">30,000</div></div>
<div class="cell" style="left:562.94px;top:774.59px;width:116.18px;height:24.21px"><div class="num" style="top:5.47px">50,000</div></div>
<div class="cell" style="left:98.4px;top:798.8px;width:116px;height:24.21px;background:#fff2cc"><div class="txt" style="top:8.91px">Greece</div></div>
<div class="cell" style="left:214.4px;top:798.8px;width:116.18px;height:24.21px"><div class="num" style="top:5.47px">60,000</div></div>
<div class="cell" style="left:330.58px;top:798.8px;width:116.18px;height:24.21px"><div class="num" style="top:5.47px">32,000</div></div>
<div class="cell" style="left:446.76px;top:798.8px;width:116.18px;height:24.21px"><div class="num" style="top:5.47px">40,000</div></div>
<div class="cell" style="left:562.94px;top:798.8px;width:116.18px;height:24.21px"><div class="num" style="top:5.47px">50,000</div></div>
<div class="cell" style="left:98.4px;top:823.01px;width:116px;height:24.21px;background:#fff2cc"><div class="txt" style="top:8.91px">Hungary</div></div>
<div class="cell" style="left:214.4px;top:823.01px;width:116.18px;height:24.21px"><div class="num" style="top:5.47px">50,000</div></div>
<div class="cell" style="left:330.58px;top:823.01px;width:116.18px;height:24.21px"><div class="num" style="top:5.47px">32,000</div></div>
<div class="cell" style="left:446.76px;top:823.01px;width:116.18px;height:24.21px"><div class="num" style="top:5.47px">34,000</div></div>
<div class="cell" style="left:562.94px;top:823.01px;width:116.18px;height:24.21px"><div class="num" style="top:5.47px">60,000</div></div>
<div class="cell" style="left:98.4px;top:847.22px;width:116px;height:24.21px;background:#fff2cc"><div class="txt" style="top:8.91px">Indonesia</div></div>
<div class="cell" style="left:214.4px;top:847.22px;width:116.18px;height:24.21px"><div class="num" style="top:5.47px">50,000</div></div>
<div class="cell" style="left:330.58px;top:847.22px;width:116.18px;height:24.21px"><div class="num" style="top:5.47px">20,000</div></div>
<div class="cell" style="left:446.76px;top:847.22px;width:116.18px;height:24.21px"><div class="num" style="top:5.47px">40,000</div></div>
<div class="cell" style="left:562.94px;top:847.22px;width:116.18px;height:24.21px"><div class="num" style="top:5.47px">50,000</div></div>
<div class="cell" style="left:98.4px;top:871.43px;width:116px;height:24.21px;background:#fff2cc"><div class="txt" style="top:8.91px">Dubai</div></div>
<div class="cell" style="left:214.4px;top:871.43px;width:116.18px;height:24.21px"><div class="num" style="top:5.47px">32,000</div></div>
<div class="cell" style="left:330.58px;top:871.43px;width:116.18px;height:24.21px"><div class="num" style="top:5.47px">6,000</div></div>
<div class="cell" style="left:446.76px;top:871.43px;width:116.18px;height:24.21px"><div class="num" style="top:5.47px">60,000</div></div>
<div class="cell" style="left:562.94px;top:871.43px;width:116.18px;height:24.21px"><div class="num" style="top:5.47px">60,000</div></div>
<div class="abs" style="left:98.4px;top:47.5px;width:580.72px;height:1px;background:#5a5550"></div>
<div class="abs" style="left:97.4px;top:72px;width:582.72px;height:2px;background:#444444"></div>
<div class="abs" style="left:97.4px;top:96px;width:582.72px;height:2px;background:#444444"></div>
<div class="abs" style="left:97.4px;top:120px;width:582.72px;height:2px;background:#444444"></div>
<div class="abs" style="left:97.4px;top:144px;width:582.72px;height:2px;background:#444444"></div>
<div class="abs" style="left:97.4px;top:168px;width:582.72px;height:2px;background:#444444"></div>
<div class="abs" style="left:97.4px;top:193px;width:582.72px;height:2px;background:#444444"></div>
<div class="abs" style="left:97.4px;top:217px;width:582.72px;height:2px;background:#444444"></div>
<div class="abs" style="left:97.4px;top:241px;width:582.72px;height:2px;background:#444444"></div>
<div class="abs" style="left:97.4px;top:265px;width:582.72px;height:2px;background:#444444"></div>
<div class="abs" style="left:97.4px;top:289px;width:582.72px;height:2px;background:#444444"></div>
<div class="abs" style="left:97.4px;top:314px;width:582.72px;height:2px;background:#444444"></div>
<div class="abs" style="left:97.4px;top:338px;width:582.72px;height:2px;background:#444444"></div>
<div class="abs" style="left:97.4px;top:362px;width:582.72px;height:2px;background:#444444"></div>
<div class="abs" style="left:97.4px;top:386px;width:582.72px;height:2px;background:#444444"></div>
<div class="abs" style="left:97.4px;top:410px;width:582.72px;height:2px;background:#444444"></div>
<div class="abs" style="left:97.4px;top:435px;width:582.72px;height:2px;background:#444444"></div>
<div class="abs" style="left:97.4px;top:459px;width:582.72px;height:2px;background:#444444"></div>
<div class="abs" style="left:97.4px;top:483px;width:582.72px;height:2px;background:#444444"></div>
<div class="abs" style="left:97.4px;top:507px;width:582.72px;height:2px;background:#444444"></div>
<div class="abs" style="left:97.4px;top:531px;width:582.72px;height:2px;background:#444444"></div>
<div class="abs" style="left:97.4px;top:556px;width:582.72px;height:2px;background:#444444"></div>
<div class="abs" style="left:97.4px;top:580px;width:582.72px;height:2px;background:#444444"></div>
<div class="abs" style="left:97.4px;top:604px;width:582.72px;height:2px;background:#444444"></div>
<div class="abs" style="left:97.4px;top:628px;width:582.72px;height:2px;background:#444444"></div>
<div class="abs" style="left:97.4px;top:653px;width:582.72px;height:2px;background:#444444"></div>
<div class="abs" style="left:97.4px;top:677px;width:582.72px;height:2px;background:#444444"></div>
<div class="abs" style="left:97.4px;top:701px;width:582.72px;height:2px;background:#444444"></div>
<div class="abs" style="left:97.4px;top:725px;width:582.72px;height:2px;background:#444444"></div>
<div class="abs" style="left:97.4px;top:749px;width:582.72px;height:2px;background:#444444"></div>
<div class="abs" style="left:97.4px;top:774px;width:582.72px;height:2px;background:#444444"></div>
<div class="abs" style="left:97.4px;top:798px;width:582.72px;height:2px;background:#444444"></div>
<div class="abs" style="left:97.4px;top:822px;width:582.72px;height:2px;background:#444444"></div>
<div class="abs" style="left:97.4px;top:846px;width:582.72px;height:2px;background:#444444"></div>
<div class="abs" style="left:97.4px;top:870px;width:582.72px;height:2px;background:#444444"></div>
<div class="abs" style="left:97.4px;top:895px;width:582.72px;height:2px;background:#444444"></div>
<div class="abs" style="left:97px;top:72.5px;width:2px;height:823.5px;background:#444444"></div>
<div class="abs" style="left:213px;top:72.5px;width:2px;height:823.5px;background:#444444"></div>
<div class="abs" style="left:330px;top:72.5px;width:2px;height:823.5px;background:#444444"></div>
<div class="abs" style="left:446px;top:72.5px;width:2px;height:823.5px;background:#444444"></div>
<div class="abs" style="left:562px;top:72.5px;width:2px;height:823.5px;background:#444444"></div>
<div class="abs" style="left:678px;top:72.5px;width:2px;height:823.5px;background:#444444"></div>
<div class="abs" style="left:213.25px;top:48.4px;width:1.5px;height:24.1px;background:#6c7d96"></div>
<div class="abs" style="left:330.25px;top:48.4px;width:1.5px;height:24.1px;background:#6c7d96"></div>
<div class="abs" style="left:446.25px;top:48.4px;width:1.5px;height:24.1px;background:#6c7d96"></div>
<div class="abs" style="left:562.25px;top:48.4px;width:1.5px;height:24.1px;background:#6c7d96"></div>
<!--chart-->
<svg class="abs" style="left:0;top:0" width="1588" height="891" viewBox="111 139 1588 891">
<rect x="814.6" y="178.4" width="826.4" height="628.4" fill="#fff"/>
<rect x="818" y="181.7" width="819.5" height="623.6" rx="1.5" fill="#fff" stroke="#a7aaae" stroke-width="1.5"/>
<rect x="950.9" y="645.53" width="513.1" height="1.3" fill="#e2e2e2"/>
<text x="937.6" y="651.28" text-anchor="end" font-family="Liberation Sans" font-size="14.1" fill="#333">50000</text>
<rect x="950.9" y="553.81" width="513.1" height="1.3" fill="#e2e2e2"/>
<text x="937.6" y="559.56" text-anchor="end" font-family="Liberation Sans" font-size="14.1" fill="#333">100000</text>
<rect x="950.9" y="462.09" width="513.1" height="1.3" fill="#e2e2e2"/>
<text x="937.6" y="467.84" text-anchor="end" font-family="Liberation Sans" font-size="14.1" fill="#333">150000</text>
<rect x="950.9" y="370.37" width="513.1" height="1.3" fill="#e2e2e2"/>
<text x="937.6" y="376.12" text-anchor="end" font-family="Liberation Sans" font-size="14.1" fill="#333">200000</text>
<rect x="950.9" y="278.65" width="513.1" height="1.3" fill="#e2e2e2"/>
<text x="937.6" y="284.4" text-anchor="end" font-family="Liberation Sans" font-size="14.1" fill="#333">250000</text>
<text x="937.6" y="743" text-anchor="end" font-family="Liberation Sans" font-size="14.1" fill="#333">0</text>
<rect x="965.8" y="253.5" width="1.3" height="484.4" fill="#e2e2e2"/>
<rect x="981.35" y="253.5" width="1.3" height="484.4" fill="#e2e2e2"/>
<rect x="996.9" y="253.5" width="1.3" height="484.4" fill="#e2e2e2"/>
<rect x="1012.44" y="253.5" width="1.3" height="484.4" fill="#e2e2e2"/>
<rect x="1027.99" y="253.5" width="1.3" height="484.4" fill="#e2e2e2"/>
<rect x="1043.54" y="253.5" width="1.3" height="484.4" fill="#e2e2e2"/>
<rect x="1059.09" y="253.5" width="1.3" height="484.4" fill="#e2e2e2"/>
<rect x="1074.64" y="253.5" width="1.3" height="484.4" fill="#e2e2e2"/>
<rect x="1090.19" y="253.5" width="1.3" height="484.4" fill="#e2e2e2"/>
<rect x="1105.73" y="253.5" width="1.3" height="484.4" fill="#e2e2e2"/>
<rect x="1121.28" y="253.5" width="1.3" height="484.4" fill="#e2e2e2"/>
<rect x="1136.83" y="253.5" width="1.3" height="484.4" fill="#e2e2e2"/>
<rect x="1152.38" y="253.5" width="1.3" height="484.4" fill="#e2e2e2"/>
<rect x="1167.93" y="253.5" width="1.3" height="484.4" fill="#e2e2e2"/>
<rect x="1183.48" y="253.5" width="1.3" height="484.4" fill="#e2e2e2"/>
<rect x="1199.03" y="253.5" width="1.3" height="484.4" fill="#e2e2e2"/>
<rect x="1214.57" y="253.5" width="1.3" height="484.4" fill="#e2e2e2"/>
<rect x="1230.12" y="253.5" width="1.3" height="484.4" fill="#e2e2e2"/>
<rect x="1245.67" y="253.5" width="1.3" height="484.4" fill="#e2e2e2"/>
<rect x="1261.22" y="253.5" width="1.3" height="484.4" fill="#e2e2e2"/>
<rect x="1276.77" y="253.5" width="1.3" height="484.4" fill="#e2e2e2"/>
<rect x="1292.32" y="253.5" width="1.3" height="484.4" fill="#e2e2e2"/>
<rect x="1307.87" y="253.5" width="1.3" height="484.4" fill="#e2e2e2"/>
<rect x="1323.41" y="253.5" width="1.3" height="484.4" fill="#e2e2e2"/>
<rect x="1338.96" y="253.5" width="1.3" height="484.4" fill="#e2e2e2"/>
<rect x="1354.51" y="253.5" width="1.3" height="484.4" fill="#e2e2e2"/>
<rect x="1370.06" y="253.5" width="1.3" height="484.4" fill="#e2e2e2"/>
<rect x="1385.61" y="253.5" width="1.3" height="484.4" fill="#e2e2e2"/>
<rect x="1401.16" y="253.5" width="1.3" height="484.4" fill="#e2e2e2"/>
<rect x="1416.7" y="253.5" width="1.3" height="484.4" fill="#e2e2e2"/>
<rect x="1432.25" y="253.5" width="1.3" height="484.4" fill="#e2e2e2"/>
<rect x="1447.8" y="253.5" width="1.3" height="484.4" fill="#e2e2e2"/>
<rect x="950.3" y="736.6" width="513.9" height="1.2" fill="#5b8fd0"/>
<rect x="950.3" y="737.4" width="513.9" height="1.6" fill="#1d2c44"/>
<polyline points="950.9,682.87 966.45,692.04 982,664.52 997.55,671.86 1013.09,646.18 1028.64,710.38 1044.19,701.21 1059.74,710.38 1075.29,646.18 1090.84,682.87 1106.38,675.53 1121.93,681.03 1137.48,701.21 1153.03,664.52 1168.58,664.52 1184.13,642.51 1199.68,624.17 1215.22,701.21 1230.77,701.21 1246.32,609.49 1261.87,627.84 1277.42,646.18 1292.97,664.52 1308.52,646.18 1324.06,701.21 1339.61,682.87 1355.16,646.18 1370.71,728.73 1386.26,675.53 1401.81,646.18 1417.35,627.84 1432.9,646.18 1448.45,646.18 1464,679.2" fill="none" stroke="#ffb900" stroke-width="2.1" stroke-linejoin="miter" stroke-miterlimit="4"/>
<polyline points="950.9,618.66 966.45,655.35 982,605.82 997.55,598.49 1013.09,591.15 1028.64,618.66 1044.19,646.18 1059.74,673.7 1075.29,572.8 1090.84,624.17 1106.38,607.66 1121.93,616.83 1137.48,673.7 1153.03,609.49 1168.58,605.82 1184.13,532.45 1199.68,477.42 1215.22,572.8 1230.77,692.04 1246.32,499.43 1261.87,536.12 1277.42,572.8 1292.97,572.8 1308.52,581.98 1324.06,609.49 1339.61,591.15 1355.16,583.81 1370.71,618.66 1386.26,607.66 1401.81,609.49 1417.35,569.14 1432.9,587.48 1448.45,609.49 1464,668.19" fill="none" stroke="#ef4c55" stroke-width="2.1" stroke-linejoin="miter" stroke-miterlimit="4"/>
<polyline points="950.9,554.46 966.45,637.01 982,600.32 997.55,591.15 1013.09,526.94 1028.64,526.94 1044.19,609.49 1059.74,563.63 1075.29,444.4 1090.84,532.45 1106.38,497.59 1121.93,598.49 1137.48,581.98 1153.03,603.99 1168.58,495.76 1184.13,523.28 1199.68,413.21 1215.22,481.08 1230.77,572.8 1246.32,407.71 1261.87,525.11 1277.42,481.08 1292.97,462.74 1308.52,508.6 1324.06,499.43 1339.61,499.43 1355.16,547.12 1370.71,615 1386.26,515.94 1401.81,554.46 1417.35,495.76 1432.9,525.11 1448.45,536.12 1464,558.13" fill="none" stroke="#a164d4" stroke-width="2.1" stroke-linejoin="miter" stroke-miterlimit="4"/>
<polyline points="950.9,481.08 966.45,545.29 982,490.26 997.55,499.43 1013.09,468.24 1028.64,519.61 1044.19,499.43 1059.74,559.96 1075.29,385.7 1090.84,418.71 1106.38,402.2 1121.93,499.43 1137.48,462.74 1153.03,466.41 1168.58,376.52 1184.13,460.91 1199.68,343.5 1215.22,471.91 1230.77,462.74 1246.32,398.54 1261.87,514.1 1277.42,389.36 1292.97,334.33 1308.52,471.91 1324.06,444.4 1339.61,444.4 1355.16,437.06 1370.71,504.93 1386.26,405.87 1401.81,462.74 1417.35,404.04 1432.9,415.05 1448.45,444.4 1464,448.06" fill="none" stroke="#40b840" stroke-width="2.1" stroke-linejoin="miter" stroke-miterlimit="4"/>
<rect x="1479.5" y="254.3" width="13.8" height="12.4" fill="#ffbd00" stroke="#ffb900" stroke-width="1"/>
<text x="1501.2" y="265.2" font-family="Liberation Sans" font-size="14.7" fill="#333">Q1</text>
<rect x="1479.5" y="275.1" width="13.8" height="12.4" fill="#f1626b" stroke="#ef4c55" stroke-width="1"/>
<text x="1501.2" y="286" font-family="Liberation Sans" font-size="14.7" fill="#333">Q2</text>
<rect x="1479.5" y="295.9" width="13.8" height="12.4" fill="#a672d4" stroke="#a164d4" stroke-width="1"/>
<text x="1501.2" y="306.8" font-family="Liberation Sans" font-size="14.7" fill="#333">Q3</text>
<rect x="1479.5" y="316.7" width="13.8" height="12.4" fill="#4fbd4f" stroke="#40b840" stroke-width="1"/>
<text x="1501.2" y="327.6" font-family="Liberation Sans" font-size="14.7" fill="#333">Q4</text>
</svg>
</div>
<div class="abs" style="left:111px;top:1030px;width:1604px;height:17px;background:#f9fafb"></div>
<div class="abs" style="left:111px;top:1029.6px;width:1604px;height:1.6px;background:#e9eaec"></div>
<div class="abs" style="left:111px;top:1034.4px;width:703px;height:8.8px;background:#dfe0e2;border-radius:5px"></div>
<div class="abs" style="left:111px;top:1047px;width:1604px;height:1.2px;background:#e1e2e5"></div>
<div class="abs" style="left:1699.6px;top:139px;width:15.4px;height:891px;background:#f9fafb"></div>
<div class="abs" style="left:1703.4px;top:141.4px;width:8.8px;height:318px;background:#dfe0e2;border-radius:5px"></div>
<div class="abs" style="left:111px;top:1048px;width:1604px;height:38px;background:#f6f7f9"></div>
<div class="abs" style="left:158px;top:1047.5px;width:84px;height:31.3px;background:#fff;border-radius:0 0 3px 3px;box-shadow:0 1px 2px rgba(0,0,0,0.18)"></div>
<div class="abs" style="left:174.6px;top:1055px;font-size:15px;color:#3c3c3c;white-space:nowrap;line-height:1">Sheet 1</div>
<svg class="abs" style="left:127px;top:1058px" width="14" height="14" viewBox="0 0 14 14"><path d="M7 1.2 V12.8 M1.2 7 H12.8" stroke="#333" stroke-width="2"/></svg>
</div>
</body></html>
